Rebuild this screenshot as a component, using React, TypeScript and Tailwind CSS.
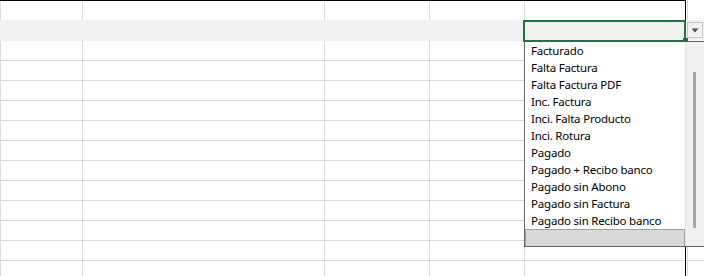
import React from "react";

const cols = [
  { w: "w-[82px]" },
  { w: "w-[242px]" },
  { w: "w-[105px]" },
  { w: "w-[95px]" },
  { w: "w-[163px]" },
];

const items = [
  "Facturado",
  "Falta Factura",
  "Falta Factura PDF",
  "Inc. Factura",
  "Inci. Falta Producto",
  "Inci. Rotura",
  "Pagado",
  "Pagado + Recibo banco",
  "Pagado sin Abono",
  "Pagado sin Factura",
  "Pagado sin Recibo banco",
];

function Row({ first = false }: { first?: boolean }) {
  return (
    <div className={`flex ${first ? "h-[20px]" : "h-[20px] border-b border-[#dadada]"}`}>
      {cols.map((c, i) => (
        <div key={i} className={`${c.w} shrink-0 border-l border-[#dadada]`} />
      ))}
      <div className="flex-1 border-l border-[#dadada]" />
    </div>
  );
}

export default function App() {
  return (
    <div
      className="relative w-[704px] h-[276px] overflow-hidden bg-white"
      style={{ fontFamily: '"Noto Sans", "Open Sans", sans-serif' }}
    >
      <div className="flex flex-col">
        <Row first />
        <div className="h-[21px] bg-[#f2f2f2]" />
        {Array.from({ length: 12 }).map((_, i) => (
          <Row key={i} />
        ))}
      </div>

      {/* page border lines */}
      <div className="absolute left-0 top-0 w-[686px] h-px bg-black" />
      <div className="absolute left-[685px] top-0 w-px h-[276px] bg-black" />

      {/* active cell */}
      <div className="absolute left-[523px] top-[20px] w-[163px] h-[22px] border-2 border-[#217346] z-20" />
      <div className="absolute left-[683px] top-[38px] w-[5px] h-[4px] bg-[#217346] z-30" />

      {/* dropdown button */}
      <div className="absolute left-[687px] top-[22px] w-[16px] h-[16px] border border-[#c6c6c6] bg-[#f3f3f3] flex items-center justify-center z-20">
        <svg width="8" height="5" viewBox="0 0 8 5">
          <path d="M0.5 0.5 L7.5 0.5 L4 4.5 Z" fill="#505050" />
        </svg>
      </div>

      {/* dropdown list */}
      <div className="absolute left-[524px] top-[41px] w-[190px] h-[206px] border border-[#646464] bg-white flex z-10">
        <div className="w-[160px] h-full flex flex-col">
          <div className="flex-1 overflow-hidden">
            {items.map((t) => (
              <div
                key={t}
                className="h-[17px] pl-[6px] text-[11.5px] tracking-[-0.2px] leading-[17px] text-black whitespace-nowrap"
              >
                {t}
              </div>
            ))}
          </div>
          <div className="h-[17px] bg-[#d9d9d9] border border-[#a0a0a0] border-b-0" />
        </div>
        <div className="flex-1 h-full bg-[#f0f0f0] border-l border-[#e2e2e2] pt-[30px] pl-[7px]">
          <div className="w-[3px] h-[156px] bg-[#a6a6a6]" />
        </div>
      </div>
    </div>
  );
}
